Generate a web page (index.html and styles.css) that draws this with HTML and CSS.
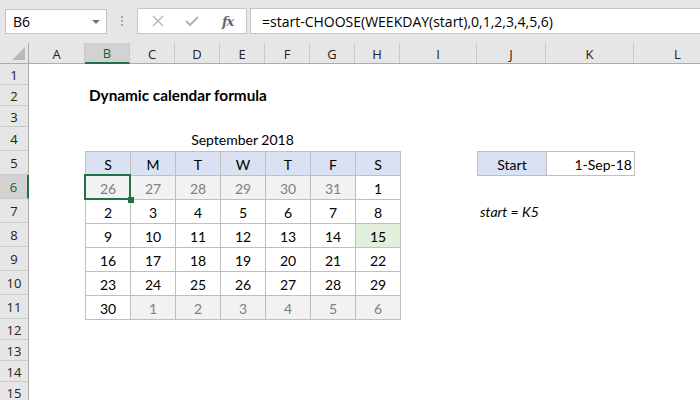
FILE: index.html
```html
<!DOCTYPE html>
<html>
<head>
<meta charset="utf-8">
<link rel="stylesheet" href="styles.css">
</head>
<body>
<div class="toolbar">
  <div class="namebox"><span class="nb-text">B6</span><span class="caret"></span></div>
  <div class="dots"><i></i><i></i><i></i></div>
  <div class="fxbox">
    <svg class="ic-x" width="12" height="12" viewBox="0 0 12 12"><path d="M1 1 L11 11 M11 1 L1 11" stroke="#b3b3b3" stroke-width="1.4" fill="none"/></svg>
    <svg class="ic-check" width="14" height="12" viewBox="0 0 14 12"><path d="M1 6 L5 10 L13 2" stroke="#b3b3b3" stroke-width="2" fill="none"/></svg>
    <span class="fx">fx</span>
  </div>
  <div class="formula">=start-CHOOSE(WEEKDAY(start),0,1,2,3,4,5,6)</div>
</div>
<div class="sheet">
  <div class="corner"><span class="tri"></span></div>
  <div class="colheads">
    <div>A</div><div class="on">B</div><div>C</div><div>D</div><div>E</div><div>F</div><div>G</div><div>H</div><div>I</div><div>J</div><div>K</div><div>L</div>
  </div>
  <div class="rowheads">
    <div>1</div><div>2</div><div>3</div><div>4</div><div>5</div><div class="on">6</div><div>7</div><div>8</div><div>9</div><div>10</div><div>11</div><div>12</div><div>13</div><div>14</div><div>15</div>
  </div>
  <div class="cells">
    <div class="title">Dynamic calendar formula</div>
    <div class="month">September 2018</div>
    <div class="cal">
      <div class="hd">S</div><div class="hd">M</div><div class="hd">T</div><div class="hd">W</div><div class="hd">T</div><div class="hd">F</div><div class="hd">S</div>
      <div class="out sel">26</div><div class="out">27</div><div class="out">28</div><div class="out">29</div><div class="out">30</div><div class="out">31</div><div>1</div>
      <div>2</div><div>3</div><div>4</div><div>5</div><div>6</div><div>7</div><div>8</div>
      <div>9</div><div>10</div><div>11</div><div>12</div><div>13</div><div>14</div><div class="today">15</div>
      <div>16</div><div>17</div><div>18</div><div>19</div><div>20</div><div>21</div><div>22</div>
      <div>23</div><div>24</div><div>25</div><div>26</div><div>27</div><div>28</div><div>29</div>
      <div>30</div><div class="out">1</div><div class="out">2</div><div class="out">3</div><div class="out">4</div><div class="out">5</div><div class="out">6</div>
    </div>
    <div class="startbox">
      <div class="lbl">Start</div>
      <div class="val">1-Sep-18</div>
    </div>
    <div class="note">start = K5</div>
  </div>
</div>
</body>
</html>
```
FILE: styles.css
```css
* { box-sizing: border-box; }
html, body { margin: 0; padding: 0; }
body {
  width: 700px;
  height: 400px;
  overflow: hidden;
  background: #ffffff;
  font-family: Lato, "Open Sans", sans-serif;
  color: #000;
}
.toolbar {
  height: 43px;
  background: #e6e6e6;
  display: flex;
  align-items: flex-start;
  padding-top: 8px;
  padding-left: 5px;
}
.namebox {
  width: 102px;
  height: 25px;
  margin-top: 1px;
  background: #fff;
  border: 1px solid #c6c6c6;
  display: flex;
  align-items: center;
  justify-content: space-between;
  padding: 0 6px 0 7px;
  font-family: "Open Sans", sans-serif;
  font-size: 14px;
}
.caret {
  width: 0; height: 0;
  border-left: 4px solid transparent;
  border-right: 4px solid transparent;
  border-top: 4px solid #777;
}
.dots {
  width: 30px;
  height: 25px;
  display: flex;
  flex-direction: column;
  align-items: center;
  justify-content: center;
  gap: 2px;
}
.dots i { display: block; width: 2px; height: 2px; background: #a8a8a8; }
.fxbox {
  width: 110px;
  height: 26px;
  background: #fff;
  border: 1px solid #c6c6c6;
  display: flex;
  align-items: center;
  padding-left: 14px;
}
.ic-x { margin-right: 21px; }
.ic-check { margin-right: 23px; }
.fx {
  font-family: "DejaVu Serif", "Liberation Serif", serif;
  font-style: italic;
  font-size: 13px;
  color: #666;
  font-weight: bold;
  letter-spacing: -1px;
}
.formula {
  flex: 1;
  height: 26px;
  margin-left: 3px;
  background: #fff;
  border: 1px solid #c6c6c6;
  border-right: none;
  display: flex;
  align-items: center;
  padding-left: 11px;
  font-family: "Open Sans", sans-serif;
  font-size: 14px;
  white-space: nowrap;
}
.sheet {
  display: grid;
  grid-template-columns: 29px 1fr;
  grid-template-rows: 21px 1fr;
}
.corner {
  background: #e6e6e6;
  border-right: 1px solid #ababab;
  border-bottom: 1px solid #ababab;
  position: relative;
}
.tri {
  position: absolute;
  right: 3px;
  bottom: 3px;
  width: 0; height: 0;
  border-left: 13px solid transparent;
  border-bottom: 13px solid #b9b9b9;
}
.colheads, .cells {
  display: grid;
  grid-template-columns: 56px repeat(7, 45px) 77px 69px 88px 88px;
}
.colheads {
  background: #e6e6e6;
  border-bottom: 1px solid #ababab;
  font-family: "Open Sans", sans-serif;
  font-size: 13px;
  color: #222;
}
.colheads div {
  display: flex;
  align-items: center;
  justify-content: center;
  border-right: 1px solid #c9c9c9;
  padding-top: 1px;
}
.colheads .on {
  background: #d2d2d2;
  border-bottom: 2px solid #217346;
  color: #1d5d3b;
  margin-bottom: -1px;
}
.rowheads, .cells {
  grid-template-rows: repeat(3, 21px) 24px repeat(7, 24px) repeat(4, 21px);
}
.rowheads {
  display: grid;
  background: #e6e6e6;
  border-right: 1px solid #ababab;
  font-family: "Open Sans", sans-serif;
  font-size: 13px;
  color: #222;
}
.rowheads div {
  display: flex;
  align-items: center;
  justify-content: center;
  border-bottom: 1px solid #c9c9c9;
  padding-top: 1px;
}
.rowheads .on {
  background: #d2d2d2;
  border-right: 2px solid #217346;
  margin-right: -1px;
  color: #1d5d3b;
}
.cells { font-size: 14px; }
.title {
  grid-column: 2;
  grid-row: 2;
  font-weight: bold;
  font-size: 15.3px;
  white-space: nowrap;
  padding-left: 4px;
  display: flex;
  align-items: flex-end;
  padding-bottom: 2px;
}
.month {
  grid-column: 2 / 9;
  grid-row: 4;
  display: flex;
  align-items: flex-end;
  justify-content: center;
  padding-bottom: 3px;
}
.cal {
  grid-column: 2 / 9;
  grid-row: 5 / 12;
  align-self: start;
  justify-self: start;
  display: grid;
  grid-template-columns: repeat(7, 44px);
  grid-auto-rows: 23px;
  gap: 1px;
  padding: 1px;
  background: #bfbfbf;
  width: 316px;
  height: 169px;
}
.cal div {
  background: #fff;
  display: flex;
  align-items: flex-end;
  justify-content: center;
  padding-bottom: 2px;
}
.cal .hd { background: #dae1f2; }
.cal .out { background: #f2f2f2; color: #808080; }
.cal .today { background: #e2efda; }
.cal .sel { position: relative; }
.cal .sel::after {
  content: "";
  position: absolute;
  left: -2px; top: -2px; right: -1px; bottom: -1px;
  border: 2px solid #217346;
}
.cal .sel::before {
  content: "";
  position: absolute;
  right: -4px;
  bottom: -4px;
  width: 6px;
  height: 6px;
  background: #217346;
  z-index: 2;
}
.startbox {
  grid-column: 10 / 12;
  grid-row: 5;
  display: grid;
  grid-template-columns: 68px 87px;
  gap: 1px;
  padding: 1px;
  background: #bfbfbf;
  width: 158px;
  height: 25px;
  align-self: start;
}
.startbox div {
  background: #fff;
  display: flex;
  align-items: flex-end;
  padding-bottom: 2px;
}
.startbox .lbl { background: #dae1f2; justify-content: center; }
.startbox .val { justify-content: flex-end; padding-right: 2px; }
.note {
  grid-column: 10;
  grid-row: 7;
  font-style: italic;
  white-space: nowrap;
  padding-left: 3px;
  display: flex;
  align-items: flex-end;
  padding-bottom: 3px;
}
```
